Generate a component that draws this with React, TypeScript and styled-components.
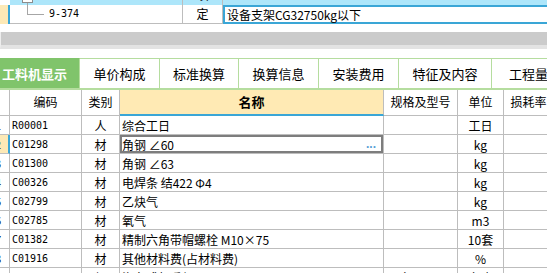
import React from 'react';
import styled, { createGlobalStyle } from 'styled-components';

const GlobalStyle = createGlobalStyle`
  html, body {
    margin: 0;
    padding: 0;
    background: #fff;
  }
  body {
    font-family: "Noto Sans CJK SC", "Liberation Sans", sans-serif;
    font-size: 12px;
    color: #000;
    overflow: hidden;
  }
`;

const GRID_LINE = '#bdbdbd';
const BLUE = '#3aa6d6';
const BEIGE = '#fde9b6';
const COLS = '10px 72px 38px 264px 74px 46px 50px 60px';

const Page = styled.div`
  width: 547px;
  height: 273px;
  overflow: hidden;
  display: flex;
  flex-direction: column;
`;

/* ---------- top (definition) grid ---------- */

const TopGrid = styled.div`
  flex: none;
  height: 24px;
  overflow: hidden;
`;

const TopInner = styled.div`
  margin-top: -14px;
  display: flex;
  flex-direction: column;
`;

const TopRow = styled.div`
  display: grid;
  grid-template-columns: 10px 173px 40px 1fr;
  height: 19px;
`;

const Indicator = styled.div<{ $current?: boolean }>`
  box-sizing: border-box;
  background: ${p => (p.$current ? BEIGE : '#fff')};
  border-right: 2px solid ${p => (p.$current ? BLUE : '#fff')};
`;

const TopCell = styled.div<{ $active?: boolean; $center?: boolean; $last?: boolean }>`
  box-sizing: border-box;
  display: flex;
  align-items: flex-start;
  justify-content: ${p => (p.$center ? 'center' : 'flex-start')};
  background: ${p => (p.$active ? '#ade6fa' : '#fff')};
  border-right: ${p => (p.$last ? 'none' : `1px solid ${GRID_LINE}`)};
  border-bottom: ${p => (p.$active ? 'none' : `1px solid ${GRID_LINE}`)};
  line-height: 18px;
  white-space: nowrap;
`;

const EditCell = styled.div`
  box-sizing: border-box;
  border: 2px solid ${BLUE};
  border-right: none;
  padding-left: 2px;
  line-height: 15px;
  white-space: nowrap;
`;

const TreeBox = styled.span`
  box-sizing: border-box;
  width: 11px;
  height: 11px;
  margin: 6px 0 0 12px;
  border: 1px solid #8c8c8c;
  background: #fff;
`;

const TreeLine = styled.span`
  flex: none;
  width: 16px;
  height: 11px;
  margin: -2px 0 0 17px;
  border-left: 1px solid #a6a6a6;
  border-bottom: 1px solid #a6a6a6;
`;

const Code = styled.span`
  font-family: "DejaVu Sans Mono", "Liberation Mono", monospace;
  font-size: 10px;
`;

const TreeCode = styled(Code)`
  margin-left: 5px;
  align-self: center;
`;

/* ---------- scroll bar ---------- */

const HScroll = styled.div`
  flex: none;
  margin-top: 8px;
  height: 13px;
  background: #cbcbcb;
  border-left: 1px solid #eeeeee;
  border-bottom: 4px solid #e3e3e3;
`;

/* ---------- tabs ---------- */

const TabBar = styled.div`
  flex: none;
  margin: 9px 0 0 -10px;
  display: flex;
  height: 30px;
  border-bottom: 2px solid #b5dd9f;
`;

const Tab = styled.div<{ $active?: boolean; $width: number }>`
  flex: 0 0 ${p => p.$width}px;
  box-sizing: border-box;
  display: flex;
  align-items: center;
  justify-content: center;
  font-size: 13px;
  font-weight: ${p => (p.$active ? 'bold' : 'normal')};
  color: ${p => (p.$active ? '#fff' : '#000')};
  background: ${p => (p.$active ? '#80c46b' : '#fff')};
  border-top: 1px solid ${p => (p.$active ? '#80c46b' : '#b5dd9f')};
  border-right: 1px solid #b5dd9f;
  white-space: nowrap;
`;

/* ---------- material table ---------- */

const Table = styled.div`
  display: flex;
  flex-direction: column;
`;

const HeaderRow = styled.div`
  display: grid;
  grid-template-columns: ${COLS};
  height: 26px;
`;

const HeaderCell = styled.div<{ $main?: boolean }>`
  box-sizing: border-box;
  display: flex;
  align-items: center;
  justify-content: center;
  padding-bottom: 2px;
  background: ${p => (p.$main ? '#ffeab4' : '#fff')};
  border-right: 1px solid ${GRID_LINE};
  border-bottom: ${p => (p.$main ? `2px solid ${BLUE}` : `1px solid ${GRID_LINE}`)};
  font-size: ${p => (p.$main ? '13px' : '12px')};
  font-weight: ${p => (p.$main ? 'bold' : 'normal')};
  white-space: nowrap;
`;

const Row = styled.div`
  display: grid;
  grid-template-columns: ${COLS};
  height: 19px;
`;

const Cell = styled.div<{ $center?: boolean; $selected?: boolean }>`
  box-sizing: border-box;
  display: flex;
  align-items: center;
  justify-content: ${p => (p.$center ? 'center' : 'space-between')};
  padding-left: ${p => (p.$center ? '0' : '2px')};
  border-right: 1px solid ${GRID_LINE};
  border-bottom: 1px solid ${GRID_LINE};
  box-shadow: ${p => (p.$selected ? 'inset 0 0 0 2px #7d7d7d' : 'none')};
  overflow: hidden;
  white-space: nowrap;
`;

const IndexCell = styled.div<{ $current?: boolean }>`
  box-sizing: border-box;
  display: flex;
  align-items: center;
  overflow: hidden;
  background: ${p => (p.$current ? BEIGE : '#fff')};
  border-right: ${p => (p.$current ? `2px solid ${BLUE}` : `1px solid ${GRID_LINE}`)};
  border-bottom: 1px solid ${GRID_LINE};
  span {
    margin-left: -5px;
    font-size: 11px;
  }
`;

const Dots = styled.span`
  margin-right: 7px;
  font-family: "Liberation Sans", sans-serif;
  font-size: 12px;
  font-weight: bold;
  color: #5b9fd6;
  line-height: 10px;
`;

const SmallBox = styled.span`
  box-sizing: border-box;
  width: 9px;
  height: 9px;
  border: 1px solid #8c8c8c;
  margin-left: 1px;
`;

interface Material {
  code: string;
  type: string;
  name: string;
  spec?: string;
  unit: string;
  selected?: boolean;
  group?: boolean;
}

const materials: Material[] = [
  { code: 'R00001', type: '人', name: '综合工日', unit: '工日' },
  { code: 'C01298', type: '材', name: '角钢 ∠60', unit: 'kg', selected: true },
  { code: 'C01300', type: '材', name: '角钢 ∠63', unit: 'kg' },
  { code: 'C00326', type: '材', name: '电焊条 结422 Φ4', unit: 'kg' },
  { code: 'C02799', type: '材', name: '乙炔气', unit: 'kg' },
  { code: 'C02785', type: '材', name: '氧气', unit: 'm3' },
  { code: 'C01382', type: '材', name: '精制六角带帽螺栓 M10×75', unit: '10套' },
  { code: 'C01916', type: '材', name: '其他材料费(占材料费)', unit: '%' },
  { code: '', type: '机', name: '汽车式起重机', spec: '5t 台', unit: '台班', group: true },
];

const tabs = [
  { label: '工料机显示', width: 90 },
  { label: '单价构成', width: 80 },
  { label: '标准换算', width: 79 },
  { label: '换算信息', width: 80 },
  { label: '安装费用', width: 80 },
  { label: '特征及内容', width: 93 },
  { label: '工程量明细', width: 100 },
];

const headers = ['', '编码', '类别', '名称', '规格及型号', '单位', '损耗率', '数量'];

export default function App() {
  return (
    <Page>
      <GlobalStyle />
      <TopGrid>
        <TopInner>
          <TopRow>
            <Indicator />
            <TopCell $active>
              <TreeBox />
            </TopCell>
            <TopCell $active $center>项</TopCell>
            <TopCell $active $last />
          </TopRow>
          <TopRow>
            <Indicator $current />
            <TopCell>
              <TreeLine />
              <TreeCode>9-374</TreeCode>
            </TopCell>
            <TopCell $center>定</TopCell>
            <EditCell>设备支架CG32750kg以下</EditCell>
          </TopRow>
        </TopInner>
      </TopGrid>

      <HScroll />

      <TabBar>
        {tabs.map((t, i) => (
          <Tab key={t.label} $active={i === 0} $width={t.width}>
            {t.label}
          </Tab>
        ))}
      </TabBar>

      <Table>
        <HeaderRow>
          {headers.map((h, i) => (
            <HeaderCell key={i} $main={h === '名称'}>
              {h}
            </HeaderCell>
          ))}
        </HeaderRow>
        {materials.map((m, i) => (
          <Row key={i}>
            <IndexCell $current={m.selected}>
              <span>{i + 1}</span>
            </IndexCell>
            <Cell>
              {m.group ? <SmallBox /> : <Code>{m.code}</Code>}
            </Cell>
            <Cell $center>{m.type}</Cell>
            <Cell $selected={m.selected}>
              <span>{m.name}</span>
              {m.selected && <Dots>...</Dots>}
            </Cell>
            <Cell>{m.spec}</Cell>
            <Cell $center>{m.unit}</Cell>
            <Cell />
            <Cell />
          </Row>
        ))}
      </Table>
    </Page>
  );
}
